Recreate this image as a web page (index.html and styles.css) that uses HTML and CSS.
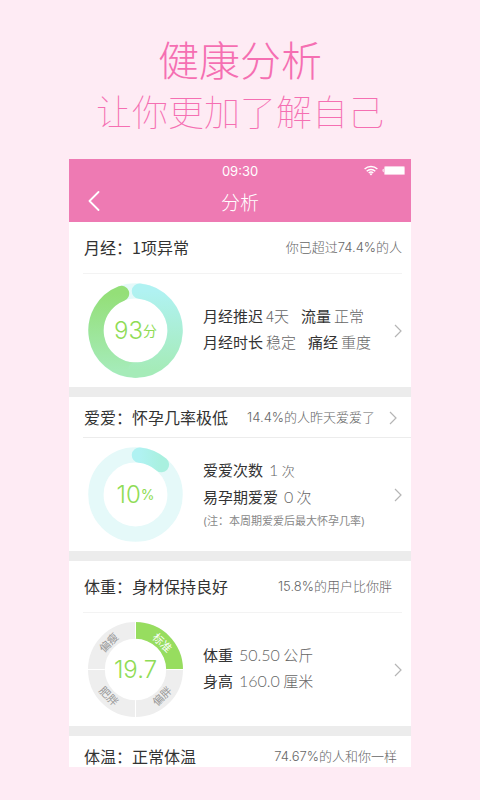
FILE: index.html
```html
<!DOCTYPE html>
<html lang="zh-CN">

<head>
  <meta charset="UTF-8">
  <meta name="viewport" content="width=device-width, initial-scale=1.0">
  <title>健康分析</title>
  <link rel="stylesheet" href="styles.css">
</head>

<body>
  <header class="intro">
    <h1>健康分析</h1>
    <p>让你更加了解自己</p>
  </header>

  <main class="phone">
    <div class="topbar">
      <div class="status">
        <span class="time">09:30</span>
        <span class="status_icons">
          <svg width="14" height="11" viewBox="0 0 14 11" fill="none" stroke="#fff" stroke-width="1.4">
            <path d="M.6 4.1a9.2 9.2 0 0 1 12.8 0M2.7 6.2a6.2 6.2 0 0 1 8.6 0M4.7 8.1a3.4 3.4 0 0 1 4.6 0" />
            <path d="M5.6 8.9a2 2 0 0 1 2.8 0L7 10.6z" fill="#fff" stroke="none" />
          </svg>
          <svg width="23" height="9" viewBox="0 0 23 9" fill="#fff">
            <path d="M1.6 2.8C.2 3 .2 6 1.6 6.2z" />
            <rect x="2" y="0" width="21" height="9" rx="1.5" opacity=".6" />
            <rect x="3" y="1" width="19" height="7" rx=".6" />
          </svg>
        </span>
      </div>
      <div class="nav">
        <button class="back" type="button" aria-label="返回">
          <svg width="12" height="20" viewBox="0 0 12 20" fill="none" stroke="#fff" stroke-width="1.8" stroke-linecap="round" stroke-linejoin="round">
            <path d="M10.5 1 1.5 10l9 9" />
          </svg>
        </button>
        <h2>分析</h2>
      </div>
    </div>

    <section class="card">
      <div class="card_head">
        <h3>月经：1项异常</h3>
        <span class="compare">你已超过74.4%的人</span>
      </div>
      <a class="card_body" href="#">
        <span class="chart">
          <svg class="ring" viewBox="0 0 96 96" fill="none" stroke-width="15.5">
            <defs>
              <linearGradient id="ringRight" x1="0" y1="0" x2="0" y2="1">
                <stop offset="0" stop-color="#b0f2f2" />
                <stop offset="1" stop-color="#a5ebb8" />
              </linearGradient>
              <linearGradient id="ringLeft" x1="0" y1="0" x2="0" y2="1">
                <stop offset="0" stop-color="#94df78" />
                <stop offset="1" stop-color="#a5ebb8" />
              </linearGradient>
            </defs>
            <circle cx="48" cy="48" r="40" stroke="#e5f9f9" />
            <path d="M48 88A40 40 0 0 1 33.9 10.6" stroke="url(#ringLeft)" stroke-linecap="round" />
            <path d="M52 8.2A40 40 0 0 1 48 88" stroke="url(#ringRight)" stroke-linecap="round" />
          </svg>
          <span class="score">93<small>分</small></span>
        </span>
        <span class="facts">
          <span class="fact">月经推迟<em>4天</em><b>流量</b><em>正常</em></span>
          <span class="fact">月经时长<em>稳定</em><b>痛经</b><em>重度</em></span>
        </span>
        <svg class="arrow" viewBox="0 0 8 14"><path d="M1 1l6 6-6 6" /></svg>
      </a>
    </section>

    <section class="card">
      <div class="card_head compact">
        <h3>爱爱：怀孕几率极低</h3>
        <a class="compare" href="#">14.4%的人昨天爱爱了
          <svg class="arrow" viewBox="0 0 8 14"><path d="M1 1l6 6-6 6" /></svg>
        </a>
      </div>
      <a class="card_body" href="#">
        <span class="chart">
          <svg class="ring" viewBox="0 0 96 96" fill="none" stroke-width="15.5">
            <defs>
              <linearGradient id="ringShort" x1="0" y1="0" x2="1" y2="0">
                <stop offset="0" stop-color="#b0f2f2" />
                <stop offset="1" stop-color="#a9f0df" />
              </linearGradient>
            </defs>
            <circle cx="48" cy="48" r="40" stroke="#e5f9f9" />
            <path d="M52 8.2A40 40 0 0 1 74.2 17.8" stroke="url(#ringShort)" stroke-linecap="round" />
          </svg>
          <span class="score">10<small>%</small></span>
        </span>
        <span class="facts spaced with_note">
          <span class="fact">爱爱次数<em><i>1</i> <small>次</small></em></span>
          <span class="fact">易孕期爱爱<em><i>0</i> 次</em></span>
          <span class="note">(注：本周期爱爱后最大怀孕几率)</span>
        </span>
        <svg class="arrow" viewBox="0 0 8 14"><path d="M1 1l6 6-6 6" /></svg>
      </a>
    </section>

    <section class="card">
      <div class="card_head">
        <h3>体重：身材保持良好</h3>
        <span class="compare inset">15.8%的用户比你胖</span>
      </div>
      <a class="card_body" href="#">
        <span class="chart">
          <svg class="ring" viewBox="0 0 96 96">
            <circle cx="48" cy="48" r="39.5" fill="none" stroke="#eee" stroke-width="17" />
            <path d="M48 0A48 48 0 0 1 96 48H79A31 31 0 0 0 48 17z" fill="#97dd5f" />
            <path d="M48 79v17M0 48h17M48 0v17M79 48h17" stroke="#fff" stroke-width="1" />
            <g class="zones">
              <text class="active" transform="translate(75 21) rotate(45)" y="4">标准</text>
              <text transform="translate(21 21) rotate(-45)" y="4">偏瘦</text>
              <text transform="translate(21 75) rotate(45)" y="4">肥胖</text>
              <text transform="translate(75 75) rotate(-45)" y="4">偏胖</text>
            </g>
          </svg>
          <span class="score">19.7</span>
        </span>
        <span class="facts spaced">
          <span class="fact">体重<em><i>50.50</i> 公斤</em></span>
          <span class="fact">身高<em><i>160.0</i> 厘米</em></span>
        </span>
        <svg class="arrow" viewBox="0 0 8 14"><path d="M1 1l6 6-6 6" /></svg>
      </a>
    </section>

    <section class="card">
      <div class="card_head last">
        <h3>体温：正常体温</h3>
        <span class="compare">74.67%的人和你一样</span>
      </div>
    </section>
  </main>
</body>

</html>
```
FILE: styles.css
```css
* {
  box-sizing: border-box;
}

body {
  margin: 0;
  padding: 33px 69px;
  background-color: #feebf4;
  color: #333;
  font-family: "Noto Sans CJK SC", sans-serif;
  font-size: 15px;
}

h1,
h2,
h3,
p {
  margin: 0;
}

a {
  color: inherit;
  text-decoration: none;
}

em,
i {
  font-style: normal;
}

.intro {
  margin-bottom: 24px;
  text-align: center;
  white-space: nowrap;
  line-height: 50px;
  color: #f56fb2;
}

.intro h1 {
  font-size: 41px;
  font-weight: 300;
}

.intro p {
  margin-top: 2px;
  font-size: 36px;
  font-weight: 100;
}

.phone {
  background-color: #ececec;
}

.topbar {
  background-color: #ee7ab3;
  color: #fff;
}

.status {
  display: grid;
  grid-template-columns: 1fr auto 1fr;
  align-items: center;
  height: 23px;
  padding: 0 6px;
}

.time {
  grid-column: 2;
  font-family: Inter, sans-serif;
  font-size: 13px;
}

.status_icons {
  display: flex;
  justify-content: flex-end;
  align-items: center;
  gap: 4px;
}

.nav {
  display: grid;
  grid-template-columns: 1fr auto 1fr;
  align-items: center;
  height: 40px;
  padding: 0 19px 2px;
}

.nav h2 {
  font-size: 19px;
  font-weight: 300;
}

.back {
  display: flex;
  justify-self: start;
  padding: 0;
  border: 0;
  background: none;
}

.card {
  background-color: #fff;
}

.card + .card {
  margin-top: 10px;
}

.card_head {
  display: flex;
  justify-content: space-between;
  align-items: center;
  margin: 0 9px 0 14px;
  padding: 15px 0 15px 1px;
  border-bottom: 1px solid #f3f3f3;
  line-height: 21px;
  white-space: nowrap;
}

.card_head.compact {
  margin-right: 0;
  padding: 10px 14px 9px 1px;
  border-color: #ececec;
}

.card_head.last {
  padding: 10px 5px 0 1px;
  border: 0;
}

.card_head h3 {
  font-size: 16px;
  font-weight: 400;
}

.compare {
  display: flex;
  align-items: center;
  gap: 14px;
  font-family: Inter, "Noto Sans CJK SC", sans-serif;
  font-size: 13px;
  font-weight: 300;
  color: #666;
}

.compare.inset {
  padding-right: 10px;
}

.card_body {
  display: flex;
  align-items: center;
  height: 113px;
  padding: 0 9px 0 19px;
}

.chart {
  display: grid;
  place-items: center;
  margin-right: 20px;
}

.chart > * {
  grid-area: 1 / 1;
}

.ring {
  display: block;
  width: 95px;
  height: 95px;
}

.score {
  display: flex;
  align-items: center;
  font-family: Inter, "Noto Sans CJK SC", sans-serif;
  font-size: 24px;
  font-weight: 300;
  line-height: 28px;
  color: #8fdc55;
}

.score small {
  font-size: 14px;
  font-weight: 400;
}

.zones {
  font-size: 11px;
  text-anchor: middle;
  fill: #999;
}

.zones .active {
  fill: #fff;
}

.facts {
  display: flex;
  flex: 1;
  flex-direction: column;
  padding-bottom: 4px;
  line-height: 26px;
  white-space: nowrap;
}

.facts.with_note {
  padding-bottom: 0;
}

.fact em {
  margin-left: 3px;
  font-weight: 300;
  color: #666;
}

.fact b {
  margin-left: 12px;
  font-weight: 400;
}

.spaced em {
  margin-left: 6px;
}

.fact i {
  font-family: Lato, sans-serif;
  font-size: 16px;
}

.fact small {
  font-size: 13px;
}

.note {
  font-family: Inter, "Noto Sans CJK SC", sans-serif;
  font-size: 11px;
  line-height: 22px;
  color: #888;
}

.arrow {
  flex: none;
  width: 8px;
  height: 14px;
  fill: none;
  stroke: #b5b5b5;
  stroke-width: 1.2;
}
```
